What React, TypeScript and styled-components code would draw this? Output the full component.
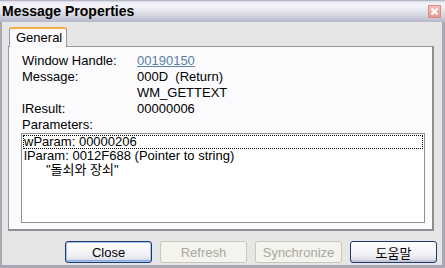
import React from "react";
import styled, { createGlobalStyle } from "styled-components";

const Global = createGlobalStyle`
  html, body { margin: 0; padding: 0; background: #fff; }
  body { font-family: "Liberation Sans", Arial, "Noto Sans CJK KR", sans-serif; font-size: 12px; }
`;

const Window = styled.div`
  width: 445px;
  height: 268px;
  box-sizing: border-box;
  background: #e6e6e6;
  border-left: 2px solid #a8a8b4;
  border-right: 3px solid #a8a8b4;
  border-bottom: 3px solid #a8a8b4;
  display: flex;
  flex-direction: column;
`;

const TitleBar = styled.div`
  height: 22px;
  margin: 0 -3px 0 -2px;
  display: flex;
  align-items: center;
  justify-content: space-between;
  padding: 0 4px 0 2px;
  background: linear-gradient(to bottom, #a4a6b8 0, #eceef4 2px, #f4f4f8 6px, #d2d3de 16px, #b6b7c8 22px);
  box-sizing: border-box;
`;

const Title = styled.span`
  font-weight: bold;
  font-size: 14px;
  color: #000;
`;

const CloseBox = styled.div`
  width: 13px;
  height: 13px;
  box-sizing: border-box;
  border: 1px solid #d88a88;
  background: linear-gradient(#f6c2b8, #e89a90);
  display: flex;
  align-items: center;
  justify-content: center;
`;

const Body = styled.div`
  flex: 1;
  display: flex;
  flex-direction: column;
  padding: 5px 9px 0 6px;
`;

const Tabs = styled.div`
  display: flex;
  padding-left: 1px;
  height: 20px;
  position: relative;
  z-index: 1;
`;

const Tab = styled.div`
  width: 58px;
  height: 20px;
  box-sizing: border-box;
  border: 1px solid #919b9c;
  border-bottom: none;
  border-top: 2px solid #f0b040;
  border-radius: 3px 3px 0 0;
  background: #fafafc;
  padding-left: 6px;
  line-height: 17px;
  font-size: 13px;
  color: #000;
`;

const Panel = styled.div`
  width: 426px;
  height: 185px;
  margin-top: -1px;
  box-sizing: border-box;
  border: 1px solid #919b9c;
  border-right: 2px solid #8a9091;
  border-bottom: 2px solid #8a9091;
  background: #fbfbfd;
  padding: 6px 0 0 13px;
  display: flex;
  flex-direction: column;
`;

const Fields = styled.div`
  display: grid;
  grid-template-columns: 115px 1fr;
  grid-auto-rows: 16px;
  font-size: 13px;
  line-height: 16px;
  color: #000;
`;

const Link = styled.span`
  color: #5a7fa8;
  text-decoration: underline;
`;

const ListBox = styled.div`
  margin-left: -1px;
  width: 404px;
  height: 90px;
  box-sizing: border-box;
  border: 1px solid #8c9496;
  background: #fff;
  padding: 1px;
  font-size: 13px;
  line-height: 14px;
`;

const Item = styled.div<{ $focus?: boolean; $indent?: number }>`
  height: 14px;
  padding-left: ${(p) => 1 + (p.$indent ?? 0)}px;
  outline: ${(p) => (p.$focus ? "1px dotted #000" : "none")};
  outline-offset: -1px;
  white-space: nowrap;
`;

const Buttons = styled.div`
  display: flex;
  justify-content: flex-end;
  gap: 8px;
  margin-right: -4px;
  padding-top: 10px;
`;

const Button = styled.button<{ $primary?: boolean }>`
  width: 87px;
  height: 22px;
  box-sizing: border-box;
  font-family: inherit;
  font-size: 13px;
  border-radius: 3px;
  padding: 0;
  color: ${(p) => (p.disabled ? "#a8a8a0" : "#000")};
  border: 1px solid ${(p) => (p.disabled ? "#c9c7ba" : "#1c3a70")};
  background: ${(p) =>
    p.disabled
      ? "#f4f3ee"
      : "linear-gradient(to bottom, #ffffff 0%, #f2f2f6 60%, #d8d8e4 100%)"};
  box-shadow: ${(p) =>
    p.$primary
      ? "inset 0 0 0 1px #a8c4ec, inset 0 -1px 0 1px #8aa8e0"
      : p.disabled
      ? "none"
      : "inset 0 -2px 0 #c6c6d6"};
`;

export default function App() {
  return (
    <>
      <Global />
      <Window>
        <TitleBar>
          <Title>Message Properties</Title>
          <CloseBox>
            <svg width="9" height="9" viewBox="0 0 9 9">
              <path d="M1.5 1.5 L7.5 7.5 M7.5 1.5 L1.5 7.5" stroke="#fff" strokeWidth="2" />
            </svg>
          </CloseBox>
        </TitleBar>
        <Body>
          <Tabs>
            <Tab>General</Tab>
          </Tabs>
          <Panel>
            <Fields>
              <span>Window Handle:</span>
              <span><Link>00190150</Link></span>
              <span>Message:</span>
              <span>000D&nbsp;&nbsp;(Return)</span>
              <span></span>
              <span>WM_GETTEXT</span>
              <span>lResult:</span>
              <span>00000006</span>
              <span>Parameters:</span>
              <span></span>
            </Fields>
            <ListBox>
              <Item $focus>wParam: 00000206</Item>
              <Item>lParam: 0012F688 (Pointer to string)</Item>
              <Item $indent={22}>"돌쇠와 장쇠"</Item>
            </ListBox>
          </Panel>
          <Buttons>
            <Button $primary>Close</Button>
            <Button disabled>Refresh</Button>
            <Button disabled>Synchronize</Button>
            <Button>도움말</Button>
          </Buttons>
        </Body>
      </Window>
    </>
  );
}
